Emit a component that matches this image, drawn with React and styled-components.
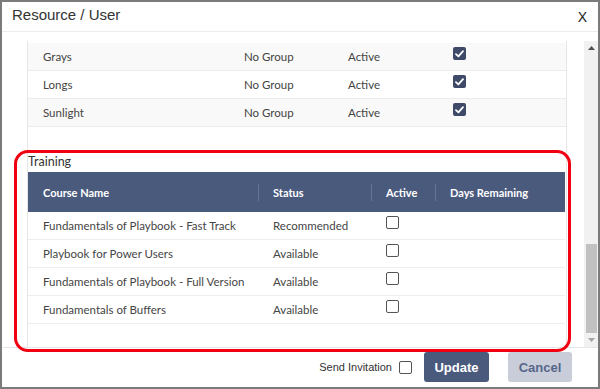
import React from "react"
import styled, { createGlobalStyle } from "styled-components"

const GlobalStyle = createGlobalStyle`
  * { box-sizing: border-box; }
  html, body { margin: 0; padding: 0; background: #fff; }
  body { font-family: Lato, "Open Sans", Arial, sans-serif; }
`

const Window = styled.div`
  position: relative;
  width: 600px;
  height: 389px;
  border: 2px solid #7b7b7b;
  background: #fff;
  display: flex;
  flex-direction: column;
  overflow: hidden;
`

const Header = styled.div`
  height: 30px;
  flex: none;
  display: flex;
  align-items: center;
  justify-content: space-between;
  padding: 0 11px 0 10px;
  border-bottom: 1px solid #ececec;
  font-family: "Liberation Sans", Arial, sans-serif;
  color: #333;
`

const Title = styled.div`
  font-size: 15px;
  margin-top: -4px;
`

const Close = styled.div`
  font-size: 14px;
  color: #222;
`

const Body = styled.div`
  flex: 1;
  display: flex;
  padding: 9px 0 0 25px;
  min-height: 0;
`

const Viewport = styled.div`
  flex: 1;
  overflow: hidden;
  padding-right: 18px;
`

const Panel = styled.div`
  width: 540px;
  height: 100%;
  border-left: 1px solid #e6e6e6;
  border-right: 1px solid #e6e6e6;
  padding-top: 2px;
`

const UserRow = styled.div`
  display: grid;
  grid-template-columns: 201px 104px 105px 1fr;
  align-items: start;
  height: 28px;
  padding: 0 0 0 15px;
  border-bottom: 1px solid #ececec;
  background: ${({ $striped }) => ($striped ? "#f9f9f9" : "#fff")};
  font-size: 11.5px;
  color: #444;
`

const Cell = styled.span`
  line-height: 27px;
  white-space: nowrap;
`

const BoxCell = styled.span`
  padding-top: 4px;
  padding-left: ${({ $pad }) => $pad || 0}px;
  display: flex;
`

const Checked = styled.span`
  width: 13px;
  height: 13px;
  border-radius: 2px;
  background: #3e4a68;
  display: flex;
  align-items: center;
  justify-content: center;
`

const Unchecked = styled.span`
  width: 13px;
  height: 13px;
  border-radius: 2px;
  border: 1px solid #555;
  background: #fff;
  flex: none;
`

const Section = styled.div`
  margin-top: 26px;
`

const SectionLabel = styled.div`
  font-size: 12.5px;
  color: #333;
  line-height: 18px;
  margin-bottom: 1px;
`

const TableHead = styled.div`
  display: grid;
  grid-template-columns: 231px 113px 64px 1fr;
  height: 40px;
  background: #4a5a7d;
  margin-right: 1px;
`

const HeadCell = styled.div`
  position: relative;
  display: flex;
  align-items: center;
  padding-left: ${({ $pad }) => $pad}px;
  color: #fff;
  font-weight: 700;
  font-size: 11px;
  white-space: nowrap;

  &::after {
    content: "";
    display: ${({ $sep }) => ($sep ? "block" : "none")};
    position: absolute;
    right: 0;
    top: 12px;
    height: 17px;
    width: 1px;
    background: #66749a;
  }
`

const CourseRow = styled.div`
  display: grid;
  grid-template-columns: 231px 113px 64px 1fr;
  height: 28px;
  border-bottom: 1px solid #eceef2;
  margin-right: 1px;
  font-size: 11.5px;
  color: #454545;
`

const CourseCell = styled.span`
  padding-left: ${({ $pad }) => $pad}px;
  line-height: 27px;
  white-space: nowrap;
`

const Scrollbar = styled.div`
  width: 14px;
  flex: none;
  background: #f1f1f1;
  display: flex;
  flex-direction: column;
  align-items: center;
`

const Arrow = styled.div`
  height: 14px;
  width: 100%;
  flex: none;
  display: flex;
  align-items: center;
  justify-content: center;
`

const Track = styled.div`
  flex: 1;
  width: 100%;
  display: flex;
  flex-direction: column;
  justify-content: flex-end;
  padding: 0 1px 0 2px;
`

const Thumb = styled.div`
  height: 89px;
  background: #c1c1c1;
`

const Footer = styled.div`
  height: 40px;
  flex: none;
  border-top: 1px solid #e6e6e6;
  display: flex;
  align-items: center;
  justify-content: flex-end;
  padding: 0 26px 1px 0;
  font-family: "Liberation Sans", Arial, sans-serif;
`

const InviteLabel = styled.label`
  display: flex;
  align-items: center;
  gap: 7px;
  font-size: 11px;
  color: #333;
  margin-right: 12px;
`

const Button = styled.button`
  width: ${({ $w }) => $w}px;
  height: 30px;
  border: none;
  border-radius: 3px;
  font-family: "Liberation Sans", Arial, sans-serif;
  font-size: 13px;
  font-weight: 700;
  background: ${({ $primary }) => ($primary ? "#4a5a7d" : "#c9cdd9")};
  color: ${({ $primary }) => ($primary ? "#fff" : "#56668a")};
  margin-left: ${({ $ml }) => $ml || 0}px;
  padding: 0;
`

const Highlight = styled.div`
  position: absolute;
  left: 12px;
  top: 148px;
  width: 557px;
  height: 202px;
  border: 3px solid #f00010;
  border-radius: 14px;
  pointer-events: none;
`

const CheckIcon = () => (
  <svg width="9" height="8" viewBox="0 0 9 8">
    <path d="M1 4.2 L3.4 6.4 L8 1.2" fill="none" stroke="#fff" strokeWidth="1.8" strokeLinecap="round" strokeLinejoin="round" />
  </svg>
)

const users = ["Grays", "Longs", "Sunlight"]

const courses = [
  ["Fundamentals of Playbook - Fast Track", "Recommended"],
  ["Playbook for Power Users", "Available"],
  ["Fundamentals of Playbook - Full Version", "Available"],
  ["Fundamentals of Buffers", "Available"],
]

export default function App() {
  return (
    <>
      <GlobalStyle />
      <Window>
        <Header>
          <Title>Resource / User</Title>
          <Close>X</Close>
        </Header>
        <Body>
          <Viewport>
            <Panel>
              {users.map((u, i) => (
                <UserRow key={u} $striped={i !== 1}>
                  <Cell>{u}</Cell>
                  <Cell>No Group</Cell>
                  <Cell>Active</Cell>
                  <BoxCell>
                    <Checked>
                      <CheckIcon />
                    </Checked>
                  </BoxCell>
                </UserRow>
              ))}
              <Section>
                <SectionLabel>Training</SectionLabel>
                <TableHead>
                  <HeadCell $pad={15} $sep>Course Name</HeadCell>
                  <HeadCell $pad={14} $sep>Status</HeadCell>
                  <HeadCell $pad={14} $sep>Active</HeadCell>
                  <HeadCell $pad={14}>Days Remaining</HeadCell>
                </TableHead>
                {courses.map(([name, status]) => (
                  <CourseRow key={name}>
                    <CourseCell $pad={15}>{name}</CourseCell>
                    <CourseCell $pad={14}>{status}</CourseCell>
                    <BoxCell $pad={14}>
                      <Unchecked />
                    </BoxCell>
                    <CourseCell />
                  </CourseRow>
                ))}
              </Section>
            </Panel>
          </Viewport>
          <Scrollbar>
            <Arrow>
              <svg width="7" height="4" viewBox="0 0 7 4">
                <path d="M0 4 L3.5 0 L7 4 Z" fill="#505050" />
              </svg>
            </Arrow>
            <Track>
              <Thumb />
            </Track>
            <Arrow>
              <svg width="7" height="4" viewBox="0 0 7 4">
                <path d="M0 0 L3.5 4 L7 0 Z" fill="#a3a3a3" />
              </svg>
            </Arrow>
          </Scrollbar>
        </Body>
        <Footer>
          <InviteLabel>
            Send Invitation
            <Unchecked />
          </InviteLabel>
          <Button $primary $w={65}>Update</Button>
          <Button $w={64} $ml={19}>Cancel</Button>
        </Footer>
        <Highlight />
      </Window>
    </>
  )
}
